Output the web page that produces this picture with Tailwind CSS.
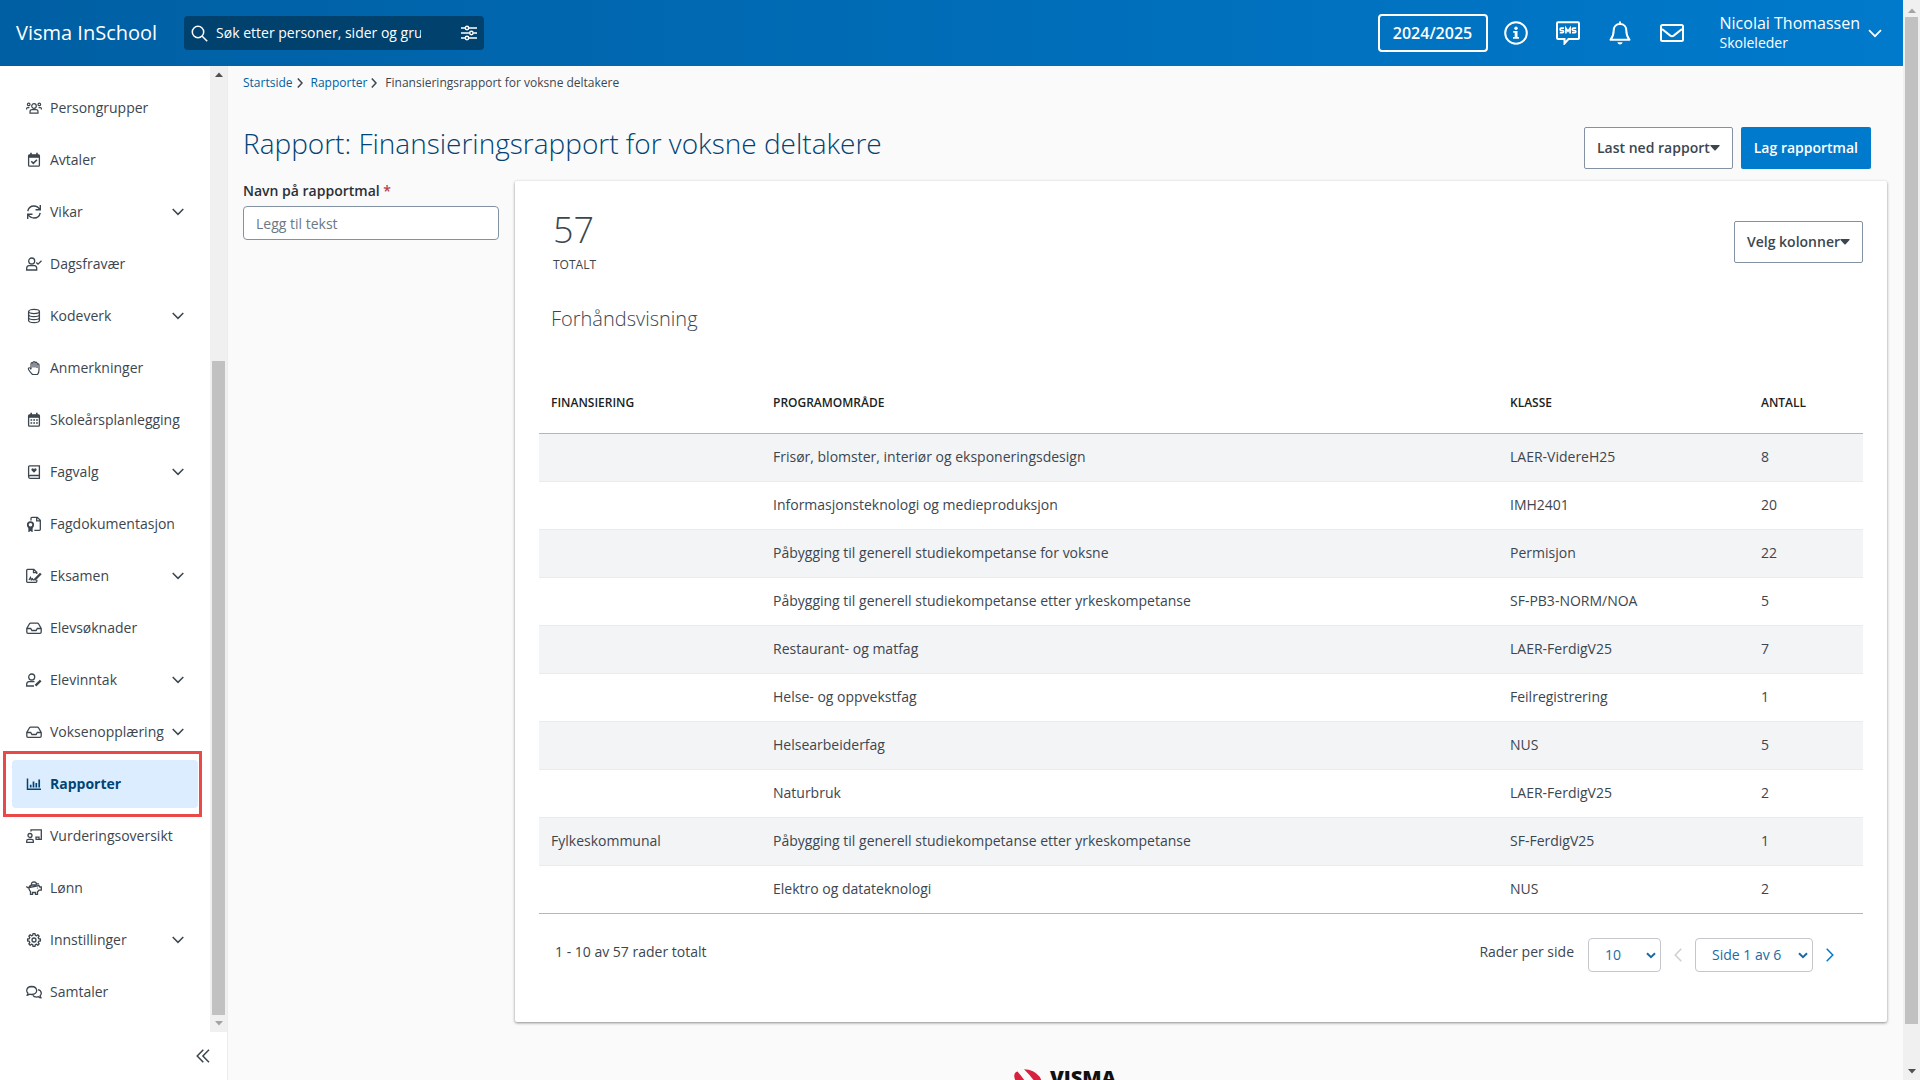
<!DOCTYPE html>
<html lang="no">
<head>
<meta charset="utf-8">
<meta name="viewport" content="width=device-width, initial-scale=1">
<title>Visma InSchool – Finansieringsrapport for voksne deltakere</title>
<script src="https://cdn.jsdelivr.net/npm/@tailwindcss/browser@4"></script>
</head>
<body class="flex h-screen overflow-hidden bg-[#fafafa] font-['Open_Sans',sans-serif] text-sm text-[#3c464f]">

<!-- Shared icons -->
<svg class="hidden" aria-hidden="true">
  <symbol id="chev" viewBox="0 0 12 8"><path d="M.7 1l5.3 5.4L11.300 1" fill="none" stroke="currentColor" stroke-width="1.500"/></symbol>
  <symbol id="crumb" viewBox="0 0 6 10"><path d="M.8.6L5 5 .8 9.400" fill="none" stroke="currentColor" stroke-width="1.500"/></symbol>
  <symbol id="caret" viewBox="0 0 10 6"><path d="M.8 0h8.400q.8.200.3.900L5.600 5.200q-.6.600-1.200 0L.5.900Q0 .2.800 0z" fill="currentColor"/></symbol>
  <symbol id="selchev" viewBox="0 0 10 7"><path d="M1 1.200l4 4 4-4" fill="none" stroke="currentColor" stroke-width="2"/></symbol>
  <symbol id="inbox" viewBox="0 0 16 16"><path d="M.8 8.500v3.500q0 1.300 1.300 1.300h11.800q1.300 0 1.300-1.300V8.500L12.500 3.800q-.4-.6-1.100-.6H4.600q-.7 0-1.100.6zM1 8.500h3.700l1.200 2h4.200l1.200-2H15" fill="none" stroke="currentColor" stroke-width="1.300"/></symbol>
</svg>

<div class="flex min-w-0 flex-1 flex-col">
  <header class="flex h-[66px] shrink-0 items-center justify-between bg-linear-to-r from-[#005fa3] to-[#007acc] pl-4 pr-[21px] text-white">
    <div class="flex items-center gap-[27px]">
      <a href="#" class="text-xl leading-7">Visma InSchool</a>
      <form class="flex h-[34px] w-[300px] items-center rounded bg-[#00416e] pl-[7px] pr-[7px]" role="search">
        <svg class="size-[17px] shrink-0" viewBox="0 0 17 17" fill="none" stroke="currentColor" stroke-width="1.500"><circle cx="7" cy="7" r="5.700"/><path d="M11.200 11.200l5 5"/></svg>
        <input type="text" aria-label="Søk" placeholder="Søk etter personer, sider og grupper" class="ml-2 w-[205px] bg-transparent text-sm text-white outline-none placeholder:text-white">
        <button type="button" aria-label="Filter" class="ml-auto"><svg class="block size-4" viewBox="0 0 16 16" fill="none" stroke="currentColor" stroke-width="1.400"><path d="M0 3h4.200M8 3h8M0 8h8.500M12.300 8H16M0 13h4.200M8 13h8"/><circle cx="6" cy="3" r="1.700"/><circle cx="10.400" cy="8" r="1.700"/><circle cx="6" cy="13" r="1.700"/></svg></button>
      </form>
    </div>
    <div class="flex items-center">
      <button class="h-[38px] w-[110px] rounded border-2 border-white text-base font-semibold">2024/2025</button>
      <button aria-label="Informasjon" class="ml-4"><svg class="block size-6" viewBox="0 0 24 24"><circle cx="12" cy="12" r="10.800" fill="none" stroke="currentColor" stroke-width="2"/><circle cx="12" cy="7.300" r="1.700" fill="currentColor"/><path d="M9.200 10h4.300v6H15v1.800H9V16h1.700v-4.200H9.200z" fill="currentColor"/></svg></button>
      <button aria-label="SMS" class="ml-7"><svg class="block size-6" viewBox="0 0 24 24" fill="none" stroke="currentColor"><path d="M2 1.200h20q1 0 1 1v14.800q0 1-1 1h-9.500l-4 4.500v-4.500H2q-1 0-1-1v-14.800q0-1 1-1z" stroke-width="2"/><path d="M8 7.200H5.200q-1.100 0-1.100 1.100t1.100 1.200h1.300q1.100 0 1.100 1.100t-1.100 1.100H3.800M9.900 12.500V7.200l2.100 3 2.100-3v5.300M20.200 7.200h-2.800q-1.100 0-1.100 1.100t1.100 1.200h1.300q1.100 0 1.100 1.100t-1.100 1.100H16" stroke-width="1.700"/></svg></button>
      <button aria-label="Varsler" class="ml-7"><svg class="block size-6" viewBox="0 0 24 24" fill="none" stroke="currentColor" stroke-width="2"><path d="M12 .5v2.500M12 3C8 3 5.700 6 5.700 9.500c0 4.500-1 6.500-3.200 9.300h19c-2.200-2.800-3.200-4.800-3.200-9.300C18.300 6 16 3 12 3z" stroke-linejoin="round"/><path d="M9.300 21.300h5.400q-.7 2.200-2.700 2.200t-2.700-2.200z" fill="currentColor" stroke="none"/></svg></button>
      <button aria-label="Meldinger" class="ml-7"><svg class="block size-6" viewBox="0 0 24 24" fill="none" stroke="currentColor" stroke-width="2"><rect x="1" y="4" width="22" height="16" rx="1.500"/><path d="M2 8l8.300 6.600q1.700 1.200 3.400 0L22 8"/></svg></button>
      <button class="ml-9 flex items-center gap-2 text-left">
        <span><span class="block text-base leading-5">Nicolai Thomassen</span><span class="block text-sm leading-5">Skoleleder</span></span>
        <svg class="h-[9px] w-[14px]"><use href="#chev"/></svg>
      </button>
    </div>
  </header>

  <div class="flex min-h-0 flex-1">
    <aside class="flex w-[228px] shrink-0 flex-col border-r border-[#ececec] bg-white">
      <div class="flex min-h-0 flex-1">
        <nav class="flex-1 overflow-hidden pl-3 pr-3 pt-[18px]">
          <ul class="flex flex-col gap-1">
            <li><a href="#" class="flex h-12 items-center gap-2 px-[14px]"><svg class="size-4 shrink-0" viewBox="0 0 16 16" fill="none" stroke="currentColor" stroke-width="1.200"><circle cx="8" cy="6" r="2.300"/><circle cx="2.700" cy="4.400" r="1.300"/><circle cx="13.300" cy="4.400" r="1.300"/><path d="M4 13.200v-1.500q0-2 2-2h4q2 0 2 2v1.500zM.6 9.500V8.600q0-1 1-1h1.800M15.400 9.500V8.600q0-1-1-1h-1.800"/></svg>Persongrupper</a></li>
            <li><a href="#" class="flex h-12 items-center gap-2 px-[14px]"><svg class="size-4 shrink-0" viewBox="0 0 16 16" fill="none" stroke="currentColor" stroke-width="1.300"><rect x="2.600" y="3" width="10.800" height="11.200" rx="1"/><path d="M2.600 4.300h10.800" stroke-width="3"/><path d="M5 .8v3M11 .8v3" stroke-width="1.600"/><path d="M5.300 9.300l2 2 3.600-3.600" stroke-width="1.600"/></svg>Avtaler</a></li>
            <li><a href="#" class="flex h-12 items-center gap-2 px-[14px]"><svg class="size-4 shrink-0" viewBox="0 0 16 16" fill="none" stroke="currentColor" stroke-width="1.400"><path d="M1.800 7.200Q2.800 2 8 2q3.700 0 5.800 3.500M14.200 8.800Q13.200 14 8 14q-3.700 0-5.800-3.500M14.300 1v4.800H9.500M1.700 15v-4.800h4.800"/></svg>Vikar<svg class="ml-auto h-2 w-3"><use href="#chev"/></svg></a></li>
            <li><a href="#" class="flex h-12 items-center gap-2 px-[14px]"><svg class="size-4 shrink-0" viewBox="0 0 16 16" fill="none" stroke="currentColor" stroke-width="1.300"><circle cx="5.700" cy="5" r="3"/><path d="M.7 14v-1.700q0-2.300 2.300-2.600h5.400q2.300.3 2.300 2.600V14zM10.300 6.500l1.700 1.700 3.500-3.500"/></svg>Dagsfravær</a></li>
            <li><a href="#" class="flex h-12 items-center gap-2 px-[14px]"><svg class="size-4 shrink-0" viewBox="0 0 16 16" fill="none" stroke="currentColor" stroke-width="1.300"><ellipse cx="8" cy="3.500" rx="5.400" ry="2.100"/><path d="M2.600 3.500v9Q3 14.600 8 14.600t5.400-2.100v-9M2.600 6.500Q3 8.600 8 8.600t5.400-2.100M2.600 9.500q.4 2.100 5.400 2.100t5.400-2.100"/></svg>Kodeverk<svg class="ml-auto h-2 w-3"><use href="#chev"/></svg></a></li>
            <li><a href="#" class="flex h-12 items-center gap-2 px-[14px]"><svg class="size-4 shrink-0" viewBox="0 0 16 16" fill="none" stroke="currentColor" stroke-width="1.200" stroke-linejoin="round"><path d="M5 9V3.700q.1-1 1-1t1 1V7.500M7 7V2.500q.1-1 1-1t1 1V7.500M9 7V3.200q.1-1 1-1t1 1V8M11 7.500V4.700q.1-.9 1-.9t1 .9V10q0 2.500-1.500 4.500h-5Q4 12 2.500 9.500q-.5-1.300.5-1.700T5 9.500"/></svg>Anmerkninger</a></li>
            <li><a href="#" class="flex h-12 items-center gap-2 px-[14px]"><svg class="size-4 shrink-0" viewBox="0 0 16 16" fill="none" stroke="currentColor" stroke-width="1.300"><rect x="2.600" y="3" width="10.800" height="11.200" rx="1"/><path d="M2.600 4.300h10.800" stroke-width="3"/><path d="M5.200.8v3M10.800.8v3" stroke-width="1.600"/><path d="M4.500 8h7.500M4.500 11h7.500" stroke-width="1.700" stroke-dasharray="1.700 1.100"/></svg>Skoleårsplanlegging</a></li>
            <li><a href="#" class="flex h-12 items-center gap-2 px-[14px]"><svg class="size-4 shrink-0" viewBox="0 0 16 16" fill="none" stroke="currentColor" stroke-width="1.300"><path d="M13.400 11.500V1.800H3.600q-1 0-1 1v10q0 1.500 1.400 1.500h10M2.600 12.600q.2-1.100 1.400-1.100h9.400v2.800"/><path d="M8 8.700L5.500 6.200q-.6-1.500.7-1.800 1-.2 1.800.8.800-1 1.800-.8 1.300.3.700 1.800z" fill="currentColor" stroke="none"/></svg>Fagvalg<svg class="ml-auto h-2 w-3"><use href="#chev"/></svg></a></li>
            <li><a href="#" class="flex h-12 items-center gap-2 px-[14px]"><svg class="size-4 shrink-0" viewBox="0 0 16 16" fill="none" stroke="currentColor" stroke-width="1.300"><path d="M5 4.500V2.200q0-.9.900-.9h5.400l3 3v9.200q0 .8-.9.800H8.300M10.700 1.300v3.500h3.500"/><circle cx="4.500" cy="8.800" r="2.700" stroke-width="1.800"/><path d="M3 11.500v3.700l1.500-1 1.500 1v-3.700" fill="currentColor"/></svg>Fagdokumentasjon</a></li>
            <li><a href="#" class="flex h-12 items-center gap-2 px-[14px]"><svg class="size-4 shrink-0" viewBox="0 0 16 16" fill="none" stroke="currentColor" stroke-width="1.300"><path d="M10.800 6V4.300l-3-3H1.600q-.9 0-.9.900v11.300q0 .8.900.8h8.300q.9 0 .9-.8v-1.700M7.500 1.300v3.400h3.300M3 12l1.500-2.500.8 2.300 1.200-1 .7 1h1.300"/><path d="M8.500 12l6.300-6.500" stroke-width="2.400"/></svg>Eksamen<svg class="ml-auto h-2 w-3"><use href="#chev"/></svg></a></li>
            <li><a href="#" class="flex h-12 items-center gap-2 px-[14px]"><svg class="size-4 shrink-0"><use href="#inbox"/></svg>Elevsøknader</a></li>
            <li><a href="#" class="flex h-12 items-center gap-2 px-[14px]"><svg class="size-4 shrink-0" viewBox="0 0 16 16" fill="none" stroke="currentColor" stroke-width="1.300"><circle cx="5.700" cy="5" r="3"/><path d="M8 14H.7v-1.700q0-2.300 2.300-2.600h5.500"/><path d="M9.500 13.700l5.200-5.200" stroke-width="2.400"/></svg>Elevinntak<svg class="ml-auto h-2 w-3"><use href="#chev"/></svg></a></li>
            <li><a href="#" class="flex h-12 items-center gap-2 px-[14px]"><svg class="size-4 shrink-0"><use href="#inbox"/></svg>Voksenopplæring<svg class="ml-auto h-2 w-3"><use href="#chev"/></svg></a></li>
            <li class="relative"><a href="#" aria-current="page" class="flex h-12 items-center gap-2 rounded bg-[#dbedff] px-[14px] font-bold text-[#004475]"><svg class="size-4 shrink-0" viewBox="0 0 16 16" fill="none" stroke="currentColor" stroke-width="1.500"><path d="M1.500 2.500v10.700H15"/><path d="M4.700 11.500V8.800M7.500 11.500V5.500M10.300 11.500V7M13.200 11.500V3.500" stroke-width="1.700"/></svg>Rapporter</a>
              <span class="pointer-events-none absolute -bottom-[9px] -left-[9px] -right-1 -top-[9px] border-3 border-[#ea4a47]"></span></li>
            <li><a href="#" class="flex h-12 items-center gap-2 px-[14px]"><svg class="size-4 shrink-0" viewBox="0 0 16 16" fill="none" stroke="currentColor" stroke-width="1.300"><path d="M5 3.500V1.800h10.300v9.500H9.500M10 11v-1.800h3V11"/><circle cx="4" cy="7.500" r="2"/><path d="M.7 14.300V13q0-1.700 1.700-1.700h3.200q1.700 0 1.700 1.700v1.300z"/></svg>Vurderingsoversikt</a></li>
            <li><a href="#" class="flex h-12 items-center gap-2 px-[14px]"><svg class="size-4 shrink-0" viewBox="0 0 16 16" fill="none" stroke="currentColor" stroke-width="1.300"><path d="M13 3.800h-1.500Q10 5 8.500 5H5.800Q3.500 5.500 3 7.500H1.500Q.6 7.300.7 6.200M3 7.500q-.3 2.500 1.500 4v2.800h2v-1.800h3v1.800h2v-2.500l1.500-1.600h2.300V7h-1.500L13 5.500zM5.500 4.800q-.3-2.800 2.500-3 2.500.2 2.500 2.500"/><circle cx="11.500" cy="8" r=".6" fill="currentColor" stroke="none"/></svg>Lønn</a></li>
            <li><a href="#" class="flex h-12 items-center gap-2 px-[14px]"><svg class="size-4 shrink-0" viewBox="0 0 16 16" fill="none" stroke="currentColor" stroke-width="1.300" stroke-linejoin="round"><path d="M6.800 3.200L7 1.600h2l.2 1.600 1.300.6 1.300-1 1.400 1.400-1 1.300.6 1.300 1.600.2v2l-1.600.2-.6 1.300 1 1.300-1.400 1.400-1.300-1-1.300.6L9 14.400H7l-.2-1.600-1.300-.6-1.300 1-1.400-1.400 1-1.300-.6-1.300L1.600 9V7l1.600-.2.6-1.300-1-1.300 1.400-1.400 1.300 1z"/><circle cx="8" cy="8" r="2"/></svg>Innstillinger<svg class="ml-auto h-2 w-3"><use href="#chev"/></svg></a></li>
            <li><a href="#" class="flex h-12 items-center gap-2 px-[14px]"><svg class="size-4 shrink-0" viewBox="0 0 16 16" fill="none" stroke="currentColor" stroke-width="1.300" stroke-linejoin="round"><path d="M1 11.300q1-.8 1-2Q.7 8 .7 6.500.9 2.700 5.700 2.500q4.700.2 5 4-.3 3.800-5 4-1.200 0-2-.4Q2.500 11.300 1 11.300zM12 5.700q3.200.7 3.300 3.600 0 1.400-1.200 2.500 0 1.200 1 2-1.500 0-2.700-1.100-.8.400-1.900.4-2.500-.1-3.700-1.700"/></svg>Samtaler</a></li>
          </ul>
        </nav>
        <!-- Menu scrollbar -->
        <div class="flex w-[17px] flex-col items-center bg-[#f0f0f0] text-[#505050]">
          <svg class="mt-[6px] h-[5px] w-2 shrink-0" viewBox="0 0 8 5"><path d="M0 5l4-4.500L8 5z" fill="currentColor"/></svg>
          <div class="grow-284"></div>
          <div class="w-[13px] grow-654 bg-[#c1c1c1]"></div>
          <svg class="my-[6px] h-[5px] w-2 shrink-0" viewBox="0 0 8 5"><path d="M0 0l4 4.500L8 0z" fill="#a3a3a3"/></svg>
        </div>
      </div>
      <div class="flex h-12 shrink-0 items-center justify-end pr-[17px]">
        <button aria-label="Skjul meny"><svg class="block size-[14px]" viewBox="0 0 14 14" fill="none" stroke="currentColor" stroke-width="1.500"><path d="M7.300.7L1.200 7l6.100 6.300M13 .7L6.900 7l6.100 6.300"/></svg></button>
      </div>
    </aside>

    <main class="min-w-0 flex-1 overflow-hidden pl-[15px] pr-4 pt-[7px]">
      <ol class="flex items-center gap-2 text-xs leading-5">
        <li class="flex items-center gap-1"><a href="#" class="text-[#005fa3]">Startside</a><svg class="h-[10px] w-[6px]"><use href="#crumb"/></svg></li>
        <li class="flex items-center gap-1"><a href="#" class="text-[#005fa3]">Rapporter</a><svg class="h-[10px] w-[6px]"><use href="#crumb"/></svg></li>
        <li>Finansieringsrapport for voksne deltakere</li>
      </ol>

      <div class="mt-[34px] flex items-start justify-between pr-4">
        <h1 class="text-[28px] font-light leading-8 text-[#004475]">Rapport: Finansieringsrapport for voksne deltakere</h1>
        <div class="flex gap-2">
          <button class="flex h-[42px] items-center rounded-xs border border-[#8292a2] bg-white px-3 font-semibold">Last ned rapport<svg class="h-[6px] w-[10px]"><use href="#caret"/></svg></button>
          <button class="h-[42px] rounded-xs bg-[#007acc] px-[13px] font-semibold text-white">Lag rapportmal</button>
        </div>
      </div>

      <div class="mt-3 flex items-start gap-4">
        <form class="w-64 shrink-0">
          <label for="name" class="block font-semibold leading-5 text-[#2b3036]">Navn på rapportmal <span class="text-[#b3434a]">*</span></label>
          <input id="name" type="text" placeholder="Legg til tekst" class="mt-[5px] h-[34px] w-full rounded border border-[#8292a2] bg-white px-3 text-sm placeholder:text-[#6b7885]">
        </form>

        <section class="min-w-0 flex-1 rounded-xs bg-white px-6 pb-[50px] pt-[29px] shadow-[0_1px_3px_rgba(0,0,0,0.45)]">
          <div class="flex items-start justify-between pl-[14px]">
            <div>
              <p class="text-4xl font-light leading-10">57</p>
              <p class="mt-[5px] text-xs leading-5">TOTALT</p>
            </div>
            <button class="mt-[11px] flex h-[42px] items-center rounded-xs border border-[#8292a2] bg-white px-3 font-semibold">Velg kolonner<svg class="h-[6px] w-[10px]"><use href="#caret"/></svg></button>
          </div>
          <h2 class="mt-[30px] pl-3 text-xl font-light leading-7">Forhåndsvisning</h2>

          <table class="mt-10 w-full table-fixed border-b border-[#adb8bf] text-left">
            <colgroup><col class="w-[222px]"><col><col class="w-[251px]"><col class="w-[114px]"></colgroup>
            <thead>
              <tr class="h-[60px] border-b border-[#adb8bf] text-xs text-[#1a1f24]">
                <th class="px-3 font-semibold">FINANSIERING</th><th class="px-3 font-semibold">PROGRAMOMRÅDE</th><th class="px-3 font-semibold">KLASSE</th><th class="px-3 font-semibold">ANTALL</th>
              </tr>
            </thead>
            <tbody class="divide-y divide-[#e9ebed]">
              <tr class="h-12 odd:bg-[#f3f4f6]"><td class="px-3"></td><td class="px-3">Frisør, blomster, interiør og eksponeringsdesign</td><td class="px-3">LAER-VidereH25</td><td class="px-3">8</td></tr>
              <tr class="h-12 odd:bg-[#f3f4f6]"><td class="px-3"></td><td class="px-3">Informasjonsteknologi og medieproduksjon</td><td class="px-3">IMH2401</td><td class="px-3">20</td></tr>
              <tr class="h-12 odd:bg-[#f3f4f6]"><td class="px-3"></td><td class="px-3">Påbygging til generell studiekompetanse for voksne</td><td class="px-3">Permisjon</td><td class="px-3">22</td></tr>
              <tr class="h-12 odd:bg-[#f3f4f6]"><td class="px-3"></td><td class="px-3">Påbygging til generell studiekompetanse etter yrkeskompetanse</td><td class="px-3">SF-PB3-NORM/NOA</td><td class="px-3">5</td></tr>
              <tr class="h-12 odd:bg-[#f3f4f6]"><td class="px-3"></td><td class="px-3">Restaurant- og matfag</td><td class="px-3">LAER-FerdigV25</td><td class="px-3">7</td></tr>
              <tr class="h-12 odd:bg-[#f3f4f6]"><td class="px-3"></td><td class="px-3">Helse- og oppvekstfag</td><td class="px-3">Feilregistrering</td><td class="px-3">1</td></tr>
              <tr class="h-12 odd:bg-[#f3f4f6]"><td class="px-3"></td><td class="px-3">Helsearbeiderfag</td><td class="px-3">NUS</td><td class="px-3">5</td></tr>
              <tr class="h-12 odd:bg-[#f3f4f6]"><td class="px-3"></td><td class="px-3">Naturbruk</td><td class="px-3">LAER-FerdigV25</td><td class="px-3">2</td></tr>
              <tr class="h-12 odd:bg-[#f3f4f6]"><td class="px-3">Fylkeskommunal</td><td class="px-3">Påbygging til generell studiekompetanse etter yrkeskompetanse</td><td class="px-3">SF-FerdigV25</td><td class="px-3">1</td></tr>
              <tr class="h-12 odd:bg-[#f3f4f6]"><td class="px-3"></td><td class="px-3">Elektro og datateknologi</td><td class="px-3">NUS</td><td class="px-3">2</td></tr>
            </tbody>
          </table>

          <div class="mt-6 flex items-start justify-between pl-4 pr-[29px]">
            <p class="pt-1 leading-5">1 - 10 av 57 rader totalt</p>
            <div class="flex items-start">
              <label for="rows" class="pt-1 leading-5">Rader per side</label>
              <div class="relative ml-[14px] text-[#1a6ba5]">
                <select id="rows" class="h-[34px] w-[73px] appearance-none rounded border border-[#c3c7cb] bg-white pl-4 text-sm"><option>10</option></select>
                <svg class="pointer-events-none absolute right-[5px] top-[14px] h-[7px] w-[10px]"><use href="#selchev"/></svg>
              </div>
              <button aria-label="Forrige side" disabled class="ml-[13px] h-[34px] text-[#ccd0d3]"><svg class="block h-[14px] w-2" viewBox="0 0 8 14"><path d="M7.300.7L1.200 7l6.100 6.300" fill="none" stroke="currentColor" stroke-width="1.500"/></svg></button>
              <div class="relative ml-[13px] text-[#1a6ba5]">
                <select aria-label="Side" class="h-[34px] w-[118px] appearance-none rounded border border-[#c3c7cb] bg-white pl-4 text-sm"><option>Side 1 av 6</option></select>
                <svg class="pointer-events-none absolute right-[5px] top-[14px] h-[7px] w-[10px]"><use href="#selchev"/></svg>
              </div>
              <button aria-label="Neste side" class="ml-[13px] h-[34px] text-[#007acc]"><svg class="block h-[14px] w-2" viewBox="0 0 8 14"><path d="M.7.7L6.800 7 .7 13.300" fill="none" stroke="currentColor" stroke-width="1.500"/></svg></button>
            </div>
          </div>
        </section>
      </div>

      <footer class="mt-[47px] flex items-start justify-center gap-2">
        <svg class="h-[18px] w-[28px]" viewBox="0 0 28 18" fill="#d8203f"><path d="M.3 8Q-.2 3.500 3.500 2.500 8 7.500 15 18H6Q1.500 13.500.3 8z"/><path d="M10 .2Q20 .5 25.500 7.500q2 3 2.300 6.500-.5 3-3.800 4-5-9-14-17.800z"/></svg>
        <span class="text-xl font-extrabold leading-[18px] text-[#111]">VISMA</span>
      </footer>
    </main>
  </div>
</div>

<!-- Page scrollbar -->
<div class="flex w-[17px] shrink-0 flex-col items-center bg-[#f0f0f0]">
  <svg class="mt-2 h-[5px] w-2 shrink-0" viewBox="0 0 8 5"><path d="M0 5l4-4.500L8 5z" fill="#a3a3a3"/></svg>
  <div class="mt-1 w-[13px] grow-1008 bg-[#c1c1c1]"></div>
  <div class="grow-39"></div>
  <svg class="my-[6px] h-[5px] w-2 shrink-0" viewBox="0 0 8 5"><path d="M0 0l4 4.500L8 0z" fill="#505050"/></svg>
</div>
</body>
</html>
